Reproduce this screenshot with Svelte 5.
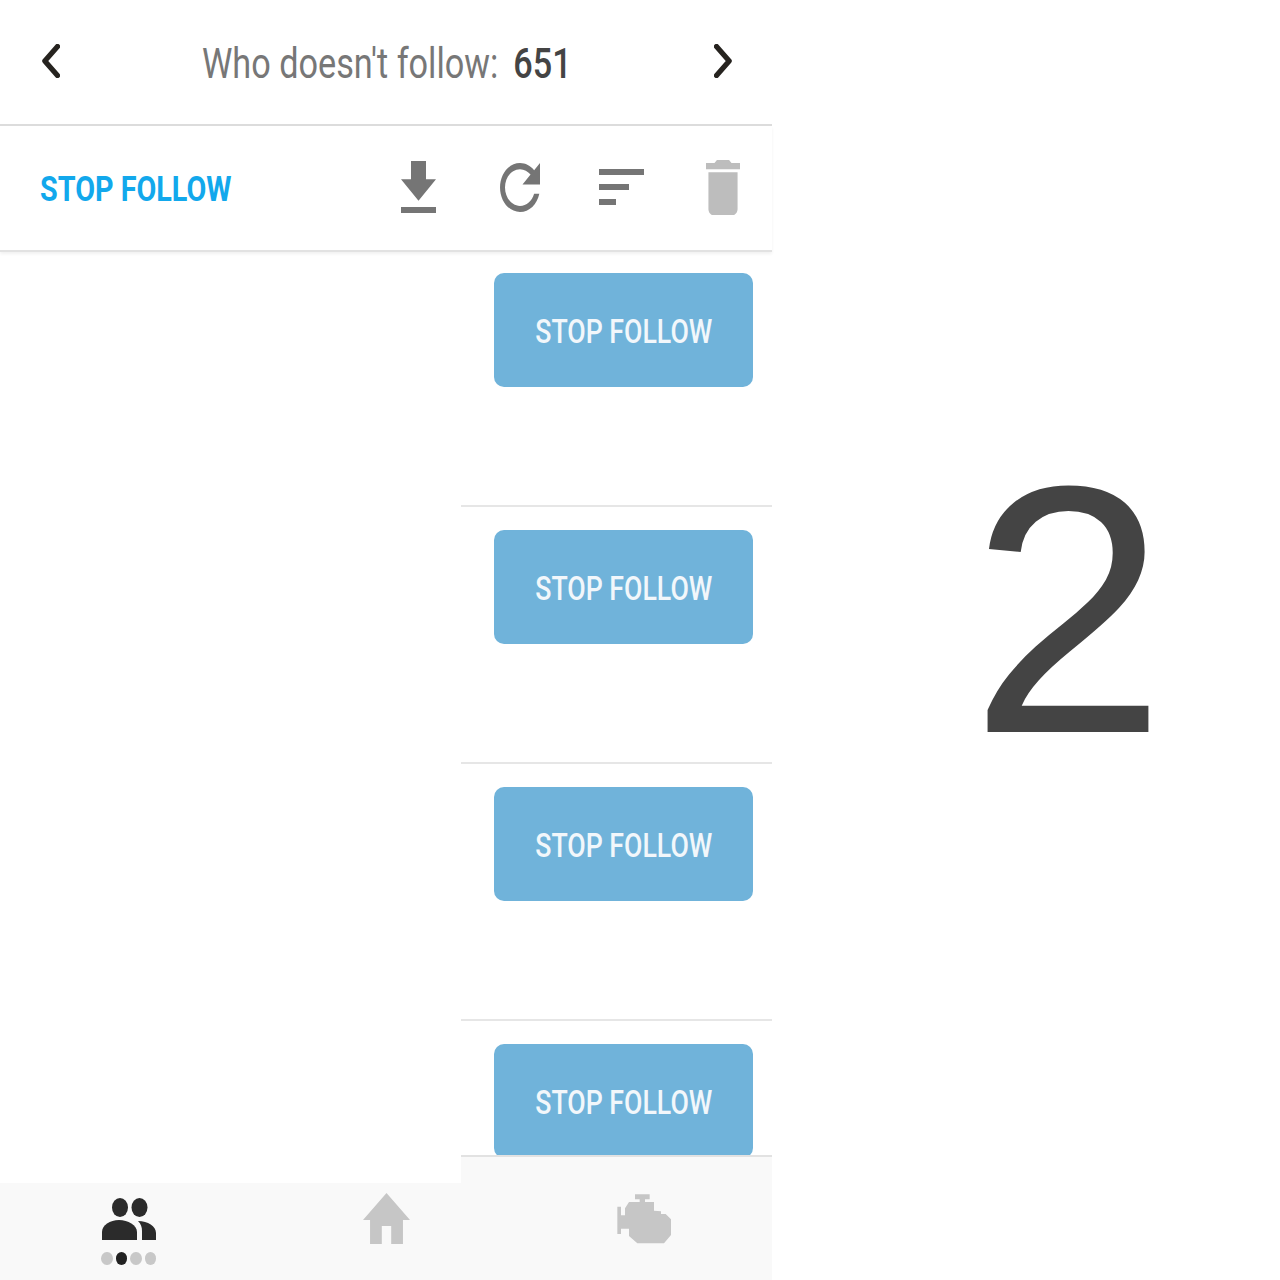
<script>
  const rows = [1, 2, 3, 4];
</script>

<div class="page">
  <div class="phone">
    <header class="topbar">
      <svg class="chevron" viewBox="0 0 18 34" aria-hidden="true"><path d="M15.5 2.5 2.8 17l12.7 14.5" /></svg>
      <div class="title">Who doesn't follow: <b>651</b></div>
      <svg class="chevron" viewBox="0 0 18 34" aria-hidden="true"><path d="M2.5 2.5 15.2 17 2.5 31.5" /></svg>
    </header>

    <div class="toolbar">
      <span class="action">STOP FOLLOW</span>
      <div class="tools">
        <svg class="ic-download" viewBox="5 3 14 17" preserveAspectRatio="none" aria-hidden="true"><path d="M19 9h-4V3H9v6H5l7 7 7-7zM5 18v2h14v-2H5z" /></svg>
        <svg class="ic-refresh" viewBox="4 4 16 16" preserveAspectRatio="none" aria-hidden="true"><path d="M17.65 6.35C16.2 4.9 14.21 4 12 4c-4.42 0-7.99 3.58-7.99 8s3.57 8 7.99 8c3.73 0 6.84-2.55 7.73-6h-2.08c-.82 2.33-3.04 4-5.65 4-3.31 0-6-2.69-6-6s2.69-6 6-6c1.66 0 3.14.69 4.22 1.78L13 11h7V4l-2.35 2.35z" /></svg>
        <svg class="ic-sort" viewBox="0 0 45 36" aria-hidden="true"><path d="M0 0h45v6H0zM0 15h30v6H0zM0 30h17v6H0z" /></svg>
        <svg class="ic-trash" viewBox="5 3 14 18" preserveAspectRatio="none" aria-hidden="true"><path d="M6 19c0 1.1.9 2 2 2h8c1.1 0 2-.9 2-2V7H6v12zM19 4h-3.5l-1-1h-5l-1 1H5v2h14V4z" /></svg>
      </div>
    </div>

    <div class="list">
      {#each rows as r (r)}
        <div class="row">
          <button type="button" class="stop"><span>STOP FOLLOW</span></button>
        </div>
      {/each}
    </div>

    <nav class="tabbar">
      <div class="mask"></div>
      <div class="tab tab-people">
        <svg class="ic-people" viewBox="0 0 55 43" aria-hidden="true">
          <ellipse cx="19" cy="9.5" rx="8" ry="9.5" />
          <ellipse cx="38.5" cy="9.5" rx="8" ry="9.5" />
          <path d="M1 42V34C1 27 9 22 18 22S36 27 36 34V42Z" />
          <path d="M37 23C47 23 55 28 55 35V42H41V33C41 29 40 26 37 23Z" />
        </svg>
        <div class="dots">
          <i></i><i class="on"></i><i></i><i></i>
        </div>
      </div>
      <div class="tab tab-home">
        <svg class="ic-home" viewBox="2 3 20 17" preserveAspectRatio="none" aria-hidden="true"><path d="M10 20v-6h4v6h5v-8h3L12 3 2 12h3v8z" /></svg>
      </div>
      <div class="tab tab-engine">
        <svg class="ic-engine" viewBox="834 162 162 150" aria-hidden="true">
          <path d="M888 163H932V178H918V186H945V212L966 214V222H980L996 238V285L975 310H895L870 288V266H846V282H835V200H846V226H858V205L870 186H902V178H888Z" />
        </svg>
      </div>
    </nav>
  </div>

  <div class="side">2</div>
</div>

<style>
  :global(body) { background: #fff; }

  .page { width: 1280px; height: 1280px; display: flex; font-family: Roboto, "Liberation Sans", sans-serif; background: #fff; overflow: hidden; }
  .phone { width: 772px; height: 1280px; display: flex; flex-direction: column; flex-shrink: 0; }

  .topbar { height: 126px; box-sizing: border-box; border-bottom: 2px solid #dcdcdc; display: flex; align-items: center; justify-content: space-between; padding: 0 40px 0 42px; }
  .chevron { width: 18px; height: 34px; margin-top: -2px; }
  .chevron path { fill: none; stroke: #26231f; stroke-width: 5.2; stroke-linecap: round; stroke-linejoin: round; }
  .title { font-size: 42px; color: #777; transform: scaleX(0.815); white-space: pre; padding-top: 2px; }
  .title b { font-weight: 500; color: #444; margin-left: 8px; }

  .toolbar { height: 126px; box-sizing: border-box; border-bottom: 2px solid #e2e2e2; box-shadow: 0 2px 3px rgba(0, 0, 0, 0.06); display: flex; align-items: center; justify-content: space-between; padding: 0 32px 2px 40px; position: relative; z-index: 1; background: #fff; }
  .action { font-size: 35px; font-weight: 700; color: #12a8ec; padding-top: 4px; transform: scaleX(0.822); transform-origin: left center; white-space: nowrap; }
  .tools { display: flex; align-items: center; }
  .tools svg { display: block; }
  .ic-download { width: 35px; height: 52px; fill: #757575; margin-right: 64px; }
  .ic-refresh { width: 40px; height: 49px; fill: #757575; margin-right: 59px; }
  .ic-sort { width: 45px; height: 36px; fill: #757575; margin-right: 62px; }
  .ic-trash { width: 34px; height: 55px; fill: #bdbdbd; }

  .list { height: 905px; margin-top: -2px; overflow: hidden; background: #fff; }
  .row { height: 257px; box-sizing: border-box; margin-left: 461px; padding: 23px 19px 0 33px; border-bottom: 2px solid #e6e6e6; }
  .stop { display: block; width: 259px; height: 114px; padding: 2px 0 0; border: none; border-radius: 10px; background: #70b3da; color: #f2f7fb; font-family: inherit; font-size: 34px; font-weight: 500; white-space: nowrap; }
  .stop span { display: inline-block; transform: scaleX(0.785); }

  .tabbar { height: 125px; background: #f9f9f9; border-top: 2px solid #e2e2e2; box-sizing: border-box; position: relative; display: grid; grid-template-columns: 257px 258px 257px; }
  .mask { position: absolute; left: 0; top: -2px; width: 461px; height: 28px; background: #fff; }
  .tab { display: flex; flex-direction: column; align-items: center; }
  .tab svg { display: block; }
  .tab-people { padding-top: 41px; }
  .ic-people { width: 55px; height: 43px; fill: #2b2b2b; }
  .dots { display: flex; gap: 3px; margin-top: 11px; }
  .dots i { width: 11.5px; height: 13px; border-radius: 50%; background: #c8c8c8; display: block; }
  .dots i.on { background: #222; }
  .tab-home { padding-top: 36px; }
  .ic-home { width: 47px; height: 51px; fill: #c6c6c6; }
  .tab-engine { padding-top: 37px; }
  .ic-engine { width: 54px; height: 50px; fill: #c6c6c6; }

  .side { flex: 1; display: flex; align-items: center; justify-content: center; padding-left: 84px; padding-bottom: 62px; font-family: "Liberation Sans", Arial, sans-serif; font-size: 353px; color: #444; line-height: 1; }
</style>
